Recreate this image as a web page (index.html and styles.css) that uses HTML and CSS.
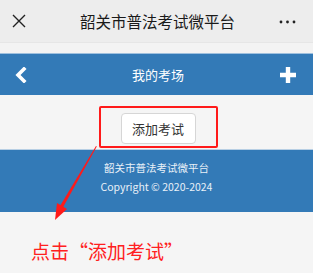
FILE: index.html
```html
<!DOCTYPE html>
<html>
<head>
<meta charset="utf-8">
<link rel="stylesheet" href="styles.css">
</head>
<body>
<div class="topnav">
  <svg class="close" width="14" height="14" viewBox="0 0 14 14"><path d="M1 1L13 13M13 1L1 13" stroke="#222" stroke-width="1.4" fill="none"/></svg>
  <div class="toptitle">韶关市普法考试微平台</div>
  <svg class="dots" width="17" height="4" viewBox="0 0 17 4"><circle cx="2" cy="2" r="1.4" fill="#222"/><circle cx="8.5" cy="2" r="1.4" fill="#222"/><circle cx="15" cy="2" r="1.4" fill="#222"/></svg>
</div>
<div class="band"></div>
<div class="header">
  <svg class="back" width="12" height="16" viewBox="0 0 12 16"><path d="M9 2L3 8L9 14" stroke="#fff" stroke-width="3.6" fill="none" stroke-linecap="square"/></svg>
  <div class="htitle">我的考场</div>
  <svg class="plus" width="18" height="18" viewBox="0 0 18 18"><path d="M9 1V17M1 9H17" stroke="#fff" stroke-width="4.4"/></svg>
</div>
<div class="main">
  <div class="redbox"><button class="btn">添加考试</button></div>
</div>
<div class="footer">
  <div class="fline">韶关市普法考试微平台</div>
  <div class="fline">Copyright © 2020-2024</div>
</div>
<div class="note">点击“添加考试”</div>
<svg class="arrow" width="313" height="273" viewBox="0 0 313 273"><path d="M96 146L96.8 146.6L61.5 210L58.5 208.5Z" fill="#ff1a1a"/><path d="M55 220L57 203L67 209Z" fill="#ff1a1a"/></svg>
</body>
</html>
```
FILE: styles.css
```css
* { box-sizing: border-box; }
html, body { margin: 0; padding: 0; }
body {
  width: 313px; height: 273px; overflow: hidden;
  background: #f5f5f5;
  font-family: "Noto Sans CJK SC", "Liberation Sans", sans-serif;
  position: relative;
}
.topnav {
  height: 42px; background: #ededed;
  display: flex; align-items: center; justify-content: space-between;
  padding: 0 17px 0 12px;
}
.toptitle { font-size: 15.5px; color: #1a1a1a; margin-left: 10px; }
.dots { margin-top: 1px; }
.band { height: 11px; background: #f3f3f3; border-top: 1px solid #e6e6e6; }
.header {
  height: 42px; background: #337ab7; border-top: 1px solid #9fc0de;
  display: flex; align-items: center; justify-content: space-between;
  padding: 0 16px 0 15px;
}
.htitle { font-size: 13px; color: #fff; margin-left: 10px; }
.main { height: 54px; display: flex; justify-content: center; padding-top: 11px; padding-left: 3px; }
.redbox {
  width: 119px; height: 42px; border: 2px solid #ff1a1a; border-radius: 2px;
  display: flex; justify-content: center; align-items: flex-start; padding-top: 5px;
}
.btn {
  width: 75px; height: 31px; background: #fff; border: 1px solid #d6d6d6; border-radius: 4px;
  font-family: inherit; font-size: 13px; color: #333; padding: 0;
}
.footer {
  height: 63px; background: #337ab7; border-top: 1px solid #b8cfe4;
  display: flex; flex-direction: column; align-items: center; padding-top: 10px; gap: 3px;
  color: #e8f0f8; font-size: 10.5px;
}
.fline { line-height: 16px; }
.note {
  color: #ff2020; font-size: 19px; padding: 27px 0 0 31px; line-height: 24px;
}
.arrow { position: absolute; left: 0; top: 0; pointer-events: none; }
```
